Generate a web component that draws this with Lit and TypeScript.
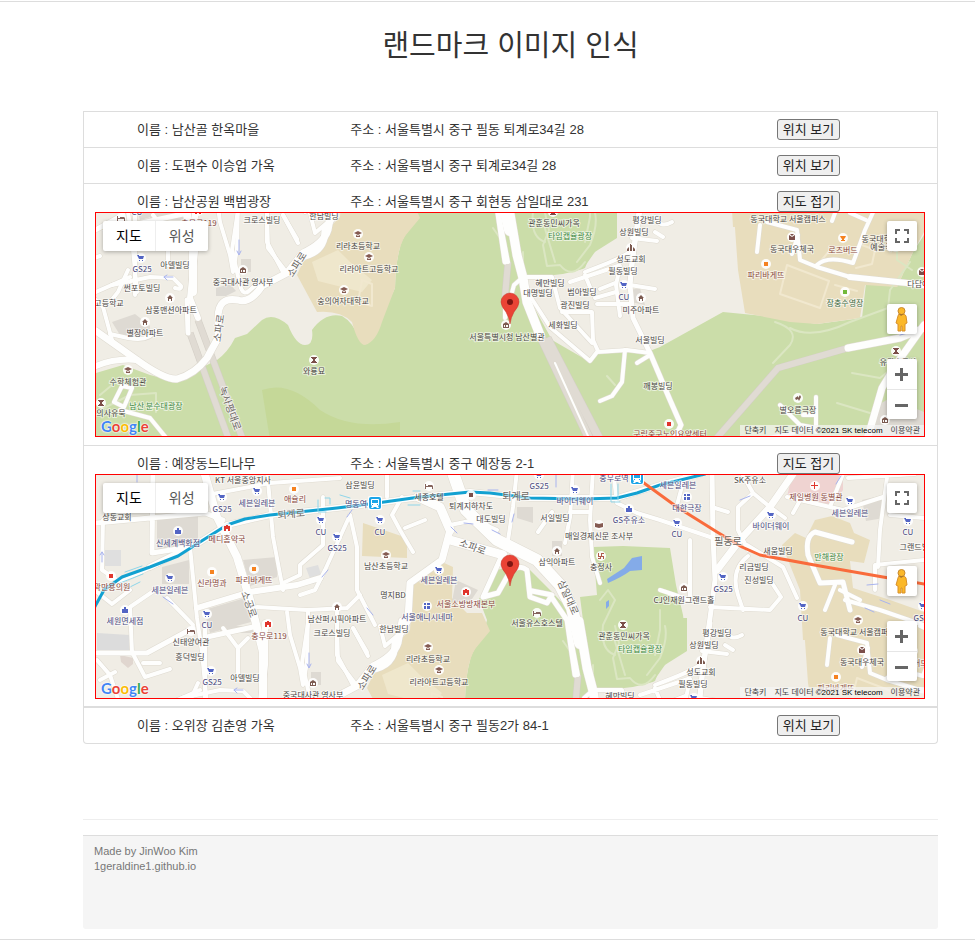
import { LitElement, html, svg, css } from "lit";
import { customElement, property, state } from "lit/decorators.js";
import { classMap } from "lit/directives/class-map.js";

interface Place {
  name: string;
  address: string;
  center: [number, number];
}
type Road = [width: number, points: string];
type Area = [fill: string, points: string];
type Label = [x: number, y: number, text: string, kind?: string, turn?: number];
type Poi = [kind: string, x: number, y: number];

const places: Place[] = [
  { name: "남산골 한옥마을", address: "서울특별시 중구 필동 퇴계로34길 28", center: [560, 190] },
  { name: "도편수 이승업 가옥", address: "서울특별시 중구 퇴계로34길 28", center: [570, 180] },
  { name: "남산공원 백범광장", address: "서울특별시 중구 회현동 삼일대로 231", center: [510, 324] },
  { name: "예장동느티나무", address: "서울특별시 중구 예장동 2-1", center: [440, 173] },
  { name: "오위장 김춘영 가옥", address: "서울특별시 중구 필동2가 84-1", center: [575, 175] },
];

const GREEN = "#cbdda9";
const TAN = "#e8ddbd";
const BLOCK = "#dedad3";

/* South sheet: Namsan park side. */
const southAreas: Area[] = [
  [GREEN, "M96 373L123 365L150 375L177 382L205 366L217 360Q228 352 235 338L247 334L262 320Q273 312 288 325Q296 345 305 345Q314 345 312 330Q325 312 342 316Q353 322 360 340L372 338L395 288Q396 250 405 236L420 213L505 213L530 300L552 340L590 362L597 352L647 352L660 347L723 312L765 316L817 324L862 318L866 283L897 287L913 252L924 235V440H96Z"],
  ["#c5d898", "M262 390Q290 380 320 410Q350 430 400 422V440H270Z"],
  [GREEN, "M516 205H617V238L590 255L585 268Q560 278 522 275Z"],
  [TAN, "M347 200L345 220L330 242L303 262L297 275L317 312Q340 310 352 322Q358 345 365 345Q376 342 382 322L395 288Q396 250 405 236L420 218L412 200Z"],
  ["#efe7cc", "M312 262L338 250L350 262L372 280L362 292L318 281Z"],
  [TAN, "M733 200L738 270L745 313L790 322L817 324L860 318L865 285L897 287L913 252L924 232V200Z"],
  ["#dcd9d3", "M216 288L230 284L236 291L226 296H216Z"],
  [BLOCK, "M241 259H251V272H241Z"],
  [BLOCK, "M112 322L135 314L150 326V335H120Z"],
  [BLOCK, "M150 213H190V220H150Z"],
  [BLOCK, "M630 290L640 288L645 305L631 302Z"],
  [BLOCK, "M878 405L890 398L924 412V440H870Z"],
];
/* North sheet: Toegye-ro side, 70 right and 413 down from the south sheet. */
const northAreas: Area[] = [
  [GREEN, "M479 599L497 570L517 565L530 570L550 590L572 613L578 640H482L487 620Z"],
  [GREEN, "M593 547L623 546L670 548L676 585L683 615L687 648L667 662L653 682L592 690L580 597L597 595Z"],
  [TAN, "M363 523L407 538V558L362 556Z"],
  [TAN, "M413 583L442 562L453 567L452 598L487 633V660H380L410 630Z"],
  [TAN, "M782 545L795 533L806 538L815 520L832 516L850 523L854 533L870 540L864 563L850 561L853 588L890 600L924 612V640H803L800 590Z"],
  ["#efd3d1", "M793 470H843V490L830 507L787 497Z"],
  [BLOCK, "M157 518L198 515V540L170 552L157 548Z"],
  [BLOCK, "M162 567L189 560V584H162Z"],
  [BLOCK, "M243 560L277 557V577L250 586Z"],
  [BLOCK, "M204 610L245 598L251 622L210 633Z"],
  ["#dcdcdc", "M97 633L130 635V650H97Z"],
  ["#dfdfdf", "M105 550H121V566H105Z"],
  ["#dfdfdf", "M306 568L318 565L323 580L312 584Z"],
  [BLOCK, "M456 580L478 590L470 602H452Z"],
  [BLOCK, "M517 507H533V523L517 518Z"],
  [BLOCK, "M862 500L884 495V518L866 521Z"],
  [BLOCK, "M552 541H562V556H552Z"],
  ["#e0d6cf", "M120 655L133 658V664L128 668L121 662Z"],
  ["#84abe8", "M632 558L642 556V570L630 571Q622 577 608 583L607 579L624 568Z"],
  ["#84abe8", "M606 602L609 600V606L606 609Z"],
];

const tunnels: Road[] = [
  [6, "M190 333L229 440"],
  [6, "M198 320L243 440"],
  [6, "M508 262L505 297"],
  [8, "M540 335L590 440"],
  [8, "M547 338L600 440"],
  [6, "M715 440L778 368L848 348"],
];

const southRoads: Road[] = [
  [7, "M332 208L328 230Q324 243 303 253L287 273L262 286Q250 304 238 300Q218 296 218 318V338L207 358Q195 374 177 379Q165 380 137 360L96 331"],
  [6, "M195 210V252L190 298L198 318"],
  [5, "M187 300L188 333"],
  [6, "M96 366Q115 358 137 360"],
  [4, "M238 210L232 250L240 285Q243 297 250 290L258 283"],
  [4, "M267 213L268 248L287 273"],
  [4, "M283 215L298 243"],
  [4, "M135 213V295M112 285L150 277L173 278L181 286Q182 290 175 288"],
  [4, "M96 300L103 307L112 340M128 270L118 292L110 302"],
  [4, "M310 213L315 233L328 222"],
  [4, "M110 334L128 338Q150 342 155 330"],
  [4, "M114 402L122 386L132 388L124 407ZM120 410L150 418L168 440"],
  [4, "M498 210L508 262"],
  [9, "M509 208L517 255L523 278L527 302L540 335"],
  [4, "M505 303V318L514 285L522 278"],
  [4, "M525 277H552L560 308L592 343"],
  [4, "M530 296L550 327L590 361L597 352L627 350L650 353"],
  [4, "M562 312H592L593 340L598 351M570 282L618 266M585 275L592 292M595 298L616 292M600 289L615 283"],
  [4, "M620 266L616 285L620 316"],
  [5, "M640 210L632 262L630 285L633 318L650 353L670 400L681 425L674 440"],
  [4, "M630 285L655 289M632 238L657 241M597 304H630"],
  [4, "M625 350L622 382L612 396L600 401M637 363L650 355"],
  [2, "M555 363L588 436"],
  [4, "M655 217Q660 229 672 222"],
  [7, "M848 348L900 338L924 328M867 440L882 388L897 363L924 325"],
  [4, "M760 225L757 252M767 222L797 230L800 260L817 267L850 277"],
  [6, "M850 277L907 283L930 286"],
  [4, "M817 265Q827 255 853 263L865 230L875 208M850 213L866 220M798 235L792 254M835 213L832 221"],
  [4, "M816 397V432M780 405L800 425L816 428L760 440M803 415H816"],
];
const northRoads: Road[] = [
  [6, "M150 567L200 542L227 525L270 515L337 508L377 503L420 497L470 492L530 498L617 498L660 485L700 474"],
  [12, "M452 470L466 510L497 540L537 560L560 585L572 608L580 643"],
  [9, "M450 540L503 555M418 497L440 507L450 530"],
  [7, "M450 530L442 560L410 583L408 620L395 643Q395 666 370 670"],
  [5, "M503 553L483 597L498 593L507 577Q517 562 527 570L530 597L547 603L552 595L532 591"],
  [5, "M552 598L567 620L575 675"],
  [4, "M387 470L387 497M402 497L392 515L400 530L413 552M405 528L425 520M450 525L475 520L497 530"],
  [4, "M517 470L513 507L507 547"],
  [4, "M573 470L570 517L565 543M570 512H590M538 532L552 512"],
  [4, "M593 470L590 520L592 557L600 583"],
  [4, "M613 470L617 503L637 513L660 520L713 538"],
  [5, "M712 470L713 537L715 580L710 618L705 652L700 695"],
  [4, "M685 475L677 505M690 540V600M715 508L728 512"],
  [7, "M717 570L740 540L770 507L793 474"],
  [4, "M753 493L738 507V530L748 550M740 470L753 493L770 507L785 518"],
  [4, "M748 556Q730 570 738 595L743 610M710 607L770 610L781 597L770 580M747 545L783 567L797 598"],
  [4, "M787 497L830 507L843 510L883 497M888 470L880 530L878 567M793 513L803 495M830 507L843 474M848 478L915 474"],
  [5, "M852 542L815 532Q805 536 808 555L820 583L843 582L850 610"],
  [4, "M875 590V565L924 560M890 515L924 518M835 585L825 610M845 600L880 610L924 625M860 600L840 590"],
  [5, "M153 470L152 553L190 547M97 523L150 518L205 513L223 520"],
  [8, "M205 475L217 517L237 557L250 600L263 652V705"],
  [4, "M190 547L197 618L202 652L207 705"],
  [4, "M103 520L102 570L120 582L160 563M97 592L112 604L130 590"],
  [4, "M267 470L273 537L283 590M207 495L270 483L340 478"],
  [4, "M323 497V545L300 565V575L283 583"],
  [4, "M350 515L325 570L315 590L300 595M350 515L357 547V590L375 625"],
  [6, "M197 608L250 592L297 585L320 578"],
  [4, "M257 607L307 610L347 608L360 595"],
  [5, "M207 637L253 627M97 653H147L193 628"],
  [4, "M155 590L130 607L132 652L145 677L170 669M143 663H160M167 598L193 625"],
  [4, "M223 628L238 648V678M238 648L248 638"],
  [4, "M287 612L290 635L300 668L303 685L307 662L308 612M337 612V655L353 685M353 628L367 652"],
  [4, "M97 660L110 675L120 705M100 680L115 672M166 705L200 690"],
  [4, "M660 590L690 600M700 665Q690 672 655 685M725 645L733 650"],
];

const southLabels: Label[] = [
  [199, 222, "충무로119", "shop"], [262, 219, "크로스빌딩"], [324, 215, "한남빌딩"],
  [358, 245, "리라초등학교"], [369, 268, "리라아트고등학교"], [343, 300, "숭의여자대학교"],
  [142, 268, "GS25", "store"], [175, 264, "아델빌딩"], [142, 287, "썬포토빌딩"],
  [243, 281, "중국대사관 영사부"], [109, 302, "고등학교"], [171, 309, "삼풍맨션아파트"],
  [145, 332, "별장아파트"], [296, 264, "소파로", "road", -58], [218, 328, "소파로", "road", -82],
  [128, 381, "수학체험관"], [156, 405, "남산 분수대광장", "park"], [111, 412, "의사유묵"],
  [231, 408, "녹사평대로", "road", 70], [314, 370, "와룡묘"], [554, 222, "관훈동민씨가옥"],
  [570, 235, "타임캡슐광장", "park"], [647, 219, "평강빌딩"], [634, 231, "상원빌딩"],
  [631, 258, "성도교회"], [623, 270, "필동빌딩"], [624, 296, "CU", "store"],
  [641, 309, "미주아파트"], [550, 282, "혜만빌딩"], [538, 292, "대명빌딩"],
  [582, 291, "범아빌딩"], [575, 304, "광진빌딩"], [563, 324, "세화빌딩"],
  [650, 339, "서울빌딩"], [507, 336, "서울특별시청 남산별관"], [658, 385, "깨봉빌딩"],
  [670, 433, "구립중구노인요양센터", "shop"], [788, 218, "동국대학교 서울캠퍼스"],
  [792, 248, "동국대우체국"], [843, 249, "로즈버드", "shop"], [880, 238, "동국대학교"],
  [885, 246, "예술극장"], [766, 274, "파리바게뜨", "shop"], [845, 302, "장충수영장", "pool"],
  [922, 283, "다담에뜰"], [798, 409, "별오름극장"], [898, 361, "유관순동상"],
];
const northLabels: Label[] = [
  [243, 479, "KT 서울중앙지사"], [295, 498, "애슐리", "shop"], [257, 502, "세븐일레븐", "store"],
  [222, 508, "GS25", "store"], [360, 484, "삼윤빌딩"], [356, 503, "명동역", "store"],
  [291, 513, "퇴계로", "road", -5], [117, 516, "상동교회"], [178, 542, "신세계백화점", "store"],
  [227, 538, "메디홈약국", "shop"], [321, 531, "CU", "store"], [337, 547, "GS25", "store"],
  [112, 586, "곽만용의원", "shop"], [212, 582, "신라명과", "shop"], [254, 579, "파리바게뜨", "shop"],
  [170, 589, "세븐일레븐", "store"], [125, 620, "세원면세점", "store"], [207, 624, "CU", "store"],
  [191, 641, "신태양여관"], [190, 656, "흥덕빌딩"], [250, 604, "소공로", "road", 70],
  [337, 618, "남산퍼시픽아파트"], [386, 565, "남산초등학교"], [380, 531, "CU", "store"],
  [429, 496, "세종호텔"], [471, 505, "퇴계지하차도"], [516, 495, "퇴계로", "road"],
  [491, 518, "대도빌딩"], [539, 485, "GS25", "store"], [575, 500, "바이더웨이", "store"],
  [555, 517, "서일빌딩"], [629, 519, "GS주유소", "store"], [599, 535, "매일경제신문 조사부"],
  [614, 477, "충무로역", "store"], [473, 546, "소파로", "road", 20], [557, 561, "삼익아파트"],
  [601, 566, "충정사"], [439, 579, "세븐일레븐", "store"], [393, 594, "명지BD"],
  [466, 603, "서울소방방재본부", "shop"], [427, 616, "서울애니시네마", "store"],
  [569, 597, "삼일대로", "road", 66], [537, 622, "서울유스호스텔"], [684, 599, "CJ인재원그랜드홀"],
  [678, 484, "세븐일레븐", "store"], [687, 507, "대한극장", "store"], [677, 533, "CU", "store"],
  [750, 479, "SK주유소"], [816, 496, "제일병원 동별관", "shop"], [850, 512, "세븐일레븐", "store"],
  [771, 525, "바이더웨이", "store"], [728, 540, "필동로", "road"], [778, 550, "새움빌딩"],
  [829, 556, "만해광장", "park"], [754, 566, "리금빌딩"], [759, 579, "진성빌딩"],
  [723, 588, "GS25", "store"], [908, 531, "CU", "store"], [918, 546, "그랜드빌라"],
  [803, 617, "CU", "store"], [923, 617, "GS25", "store"],
];

const southPois: Poi[] = [
  ["school", 358, 234], ["school", 369, 257], ["school", 344, 290], ["cart", 141, 258],
  ["museum", 243, 270], ["home", 170, 298], ["home", 145, 322], ["school", 128, 370],
  ["tower", 101, 403], ["tower", 314, 360], ["tower", 553, 212], ["church", 631, 248],
  ["cart", 624, 285], ["home", 641, 298], ["museum", 506, 325], ["clinic", 669, 424],
  ["school", 788, 207], ["post", 792, 237], ["cup", 843, 238], ["bread", 766, 264],
  ["pool", 845, 292], ["film", 798, 398], ["tower", 896, 351], ["museum", 885, 420],
  ["post", 922, 272], ["fire", 198, 211],
];
const northPois: Poi[] = [
  ["bread", 294, 489], ["cart", 257, 491], ["cart", 222, 497], ["bag", 178, 531],
  ["fire", 227, 528], ["cart", 321, 520], ["cart", 337, 537], ["clinic", 111, 576],
  ["bread", 212, 572], ["bread", 254, 569], ["cart", 170, 578], ["bag", 125, 610],
  ["cart", 207, 614], ["bed", 191, 631], ["home", 337, 607], ["school", 386, 555],
  ["cart", 380, 520], ["bed", 429, 486], ["stop", 471, 495], ["cart", 539, 475],
  ["cart", 575, 490], ["bag", 629, 509], ["book", 599, 525], ["home", 557, 551],
  ["temple", 601, 556], ["cart", 439, 570], ["fire", 466, 592], ["cinema", 427, 606],
  ["bed", 537, 613], ["museum", 684, 588], ["cinema", 687, 497], ["cart", 677, 523],
  ["cross", 815, 486], ["cart", 850, 501], ["cart", 771, 515], ["cart", 723, 577],
  ["cart", 908, 521], ["cart", 803, 606], ["cart", 923, 606],
];

const glyphs: Record<string, [string, string]> = {
  school: ["#855b52", "M-4-1L0-3L4-1L0 1ZM-2 1L0 2L2 1V3H-2Z"],
  cart: ["#5365c4", "M-4-3H-2L-2-2H3L2 1H-2ZM-2 2H-1V3H-2ZM1 2H2V3H1Z"],
  home: ["#7c5a50", "M-3 0L0-3L3 0H2V3H1V1H-1V3H-2V0Z"],
  museum: ["#7c5a50", "M-3-1L0-3L3-1V0H-3ZM-3 0H-2V3H-3ZM-1 0H0V3H-1ZM2 0H3V3H2ZM-3 2H3V3H-3Z"],
  tower: ["#7c4f4a", "M-3-3H3V-2H2V-1H1V1H2V2H3V3H-3V2H-2V1H-1V-1H-2V-2H-3Z"],
  church: ["#7c5a50", "M-1-4H0V-3H1V3H-1ZM-4 1L-2-1V3H-4ZM2-1L4 1V3H2Z"],
  clinic: ["#e0352d", "M-2-2H2V2H-2Z"],
  fire: ["#e0352d", "M-3-2H-1V-3H1V-2H3V3H1V1H-1V3H-3Z"],
  post: ["#7c4f4a", "M-3-2L0 0L3-2V3H-3ZM-2-3H2L0-1Z"],
  stop: ["#7c4f4a", "M-2-2H2V2H-2Z"],
  book: ["#855b52", "M-4-2L0-1L4-2V2L0 3L-4 2Z"],
  cup: ["#f58220", "M-3-2H3L2 0L1 1V2H2V3H-2V2H-1V1L-2 0Z"],
  bread: ["#f58220", "M-2-2H2V2H-2Z"],
  pool: ["#73b93c", "M-2-2H2V2H-2Z"],
  film: ["#7c5a50", "M-3 0L0-2V0L2-3L3-1L1 3L0 1L-2 2Z"],
  bag: ["#5365c4", "M-3-1H-1V-3H1V-1H3V3H-3Z"],
  bed: ["#85645c", "M-4-2H-3V0H-1V-1H3L4 0V3H3V1H-3V3H-4Z"],
  temple: ["#b05a4a", "M-3-3H-2V0H0V-3H3V-2H1V0H3V3H2V1H0V3H-3V2H-1V1H-3Z"],
  cinema: ["#5365c4", "M-3-3H-1V-1H-3ZM0-3H3V-1H0ZM-3 0H-1V3H-3ZM0 0H3V3H0Z"],
  cross: ["#e0352d", "M-1-4H0V-1H3V0H0V3H-1V0H-4V-1H-1Z"],
};

const SHIFT_X = 70;
const SHIFT_Y = 413;
const NORTH = `translate(${-SHIFT_X} ${-SHIFT_Y})`;

const allLabels: Label[] = [
  ...northLabels.map(([x, y, ...rest]) => [x - SHIFT_X, y - SHIFT_Y, ...rest] as Label),
  ...southLabels,
];
const allPois: Poi[] = [
  ...northPois.map(([kind, x, y]) => [kind, x - SHIFT_X, y - SHIFT_Y] as Poi),
  ...southPois,
];

@customElement("place-map")
class PlaceMap extends LitElement {
  @property({ attribute: false }) center: [number, number] = [0, 0];
  @state() private satellite = false;

  static styles = css`
    :host {
      display: block;
      position: relative;
      height: 223px;
      overflow: hidden;
      border: 1px solid #f00;
      background: #f0ede5;
      font-family: "Liberation Sans", "Noto Sans CJK KR", sans-serif;
    }
    button { margin: 0; padding: 0; border: 0; background: none; font: inherit; color: inherit; cursor: pointer; }
    .canvas { display: block; width: 100%; height: 100%; }
    .canvas.satellite { filter: saturate(60%) brightness(70%); }
    .line { fill: none; stroke-linejoin: round; stroke-linecap: round; }
    .edge { stroke: #dfdbd1; }
    .road { stroke: #fefefd; }
    .tunnel { stroke: #e0dbd3; stroke-linecap: butt; }
    .tunnel-edge { stroke: #d3cec6; stroke-linecap: butt; }
    .trail { stroke: #dbe6c2; stroke-width: 2; }
    .yard { stroke: #f1e8cf; stroke-width: 2; }
    .arrow { stroke: #a9b4ee; stroke-width: 1; }
    .metro { stroke: #12a1d1; stroke-width: 3; }
    .exits { stroke: #8fd6ea; stroke-width: 1; }
    .metro3 { stroke: #f96b3b; stroke-width: 3; }
    .label {
      font-family: "Noto Sans CJK KR", sans-serif;
      font-size: 8px;
      text-anchor: middle;
      dominant-baseline: central;
      fill: #4b4744;
      stroke: #fff;
      stroke-opacity: 0.6;
      stroke-width: 2px;
      stroke-linejoin: round;
      paint-order: stroke;
    }
    .store { fill: #4a4a80; }
    .shop { fill: #8b4a42; }
    .park { fill: #3f8a45; }
    .pool { fill: #3c6b45; }
    .label.road { fill: #6b6762; stroke: #fff; font-size: 10px; }
    .types { position: absolute; left: 7px; top: 8px; display: flex; border-radius: 2px; background: #fff; box-shadow: 0 1px 4px #0000004d; }
    .type { padding: 0 13px; height: 30px; font-size: 14px; line-height: 30px; color: #565656; }
    .type + .type { border-left: 1px solid #eee; }
    .type.on { color: #000; }
    .tool { display: block; width: 30px; height: 30px; }
    .full, .walk, .zoom { position: absolute; right: 7px; border-radius: 2px; background: #fff; box-shadow: 0 1px 4px #0000004d; }
    .full { top: 8px; }
    .walk { bottom: 102px; }
    .zoom { bottom: 17px; }
    .zoom .tool + .tool { border-top: 1px solid #e6e6e6; }
    .tool svg { display: block; width: 30px; height: 30px; }
    .logo {
      position: absolute; left: 5px; bottom: 0;
      font: 700 15px/20px Lato, sans-serif; text-decoration: none;
      text-shadow: 0 0 1px #fff, 0 0 2px #fff, 0 0 2px #fff;
    }
    .b { color: #4285f4; } .r { color: #ea4335; } .y { color: #fbbc04; } .g { color: #34a853; }
    .credit {
      position: absolute; right: 0; bottom: 0; display: flex; gap: 8px; padding: 0 4px;
      height: 11px; line-height: 11px; font-size: 8px; color: #444; background: #f5f5f5b3;
    }
    .credit b { font-weight: 400; color: #000; }
    .credit a { color: inherit; text-decoration: none; }
  `;

  private inView(x: number, y: number) {
    return Math.abs(x - this.center[0]) < 414 && Math.abs(y - this.center[1]) < 114;
  }
  private roads(list: Road[], cls: string, extra: number) {
    return list.map(([w, d]) => svg`<path class="line ${cls}" stroke-width=${w + extra} d=${d} />`);
  }
  private areas(list: Area[]) {
    return list.map(([fill, d]) => svg`<path fill=${fill} d=${d} />`);
  }
  private pois() {
    return allPois.filter(([, x, y]) => this.inView(x, y)).map(([kind, x, y]) => svg`<g transform="translate(${x} ${y})">
      <circle r="5" fill="#fff" fill-opacity="0.9" /><path fill=${glyphs[kind][0]} d=${glyphs[kind][1]} /></g>`);
  }
  private labels() {
    return allLabels.filter(([x, y]) => this.inView(x, y)).map(([x, y, text, kind = "", turn = 0]) =>
      svg`<text class="label ${kind}" x=${x} y=${y} transform="rotate(${turn} ${x} ${y})">${text}</text>`);
  }
  private station(x: number, y: number) {
    return svg`<g transform="translate(${x} ${y})">
      <rect x="-7" y="-7" width="14" height="14" rx="2" fill="#fff" />
      <rect x="-6" y="-6" width="12" height="12" rx="2" fill="#1ba5e8" />
      <path fill="#fff" fill-rule="evenodd" d="M-3-4H3Q4-4 4-3V2L3 3L4 5H2L1 4H-1L-2 5H-4L-3 3L-4 2V-3Q-4-4-3-4ZM-3-3V0H3V-3ZM-3 1V2H-2V1ZM2 1V2H3V1Z" />
    </g>`;
  }

  render() {
    const [cx, cy] = this.center;
    return html`
      <svg class=${classMap({ canvas: true, satellite: this.satellite })} viewBox="${cx - 414} ${cy - 111} 828 223"
        preserveAspectRatio="xMidYMid slice" role="img" aria-label="지도">
        <g transform=${NORTH}>${this.areas(northAreas)}</g>
        ${this.areas(southAreas)}
        <path class="line trail" d="M545 213L549 230L543 245L547 266L560 265Q572 280 585 262M595 213Q598 225 590 245L577 262M100 395L112 385M100 410L130 395L156 393V412M775 322Q800 330 790 345L773 363M790 328Q812 340 850 322L888 308L890 290L910 262M852 373L880 378L890 370M837 403L870 413M108 425L120 432M607 376L615 385M493 228L500 238M897 250V260L912 270M523 252V268" />
        <path class="line yard" d="M787 265L829 281L820 308L780 294ZM835 285L857 291M862 245L875 250L872 264L856 268M362 280L372 284V306L358 302ZM830 250L820 262" />
        <g transform=${NORTH}>
          <path class="line trail" d="M600 600L608 590L615 600L603 625Q600 650 615 655M613 635L625 675M660 610V630L655 655" />
        </g>
        ${this.roads(tunnels, "tunnel-edge", 1)}${this.roads(tunnels, "tunnel", 0)}
        <g transform=${NORTH}>${this.roads(northRoads, "edge", 1)}</g>
        ${this.roads(southRoads, "edge", 1)}
        <g transform=${NORTH}>${this.roads(northRoads, "road", 0)}</g>
        ${this.roads(southRoads, "road", 0)}
        <path class="line arrow" d="M239 240V254M237 251L239 255L241 251M173 277H164M167 275L164 277L167 280M900 335L908 333" />
        <g transform=${NORTH}>
          <path class="line arrow" d="M102 562V552M100 555L102 552L104 555M137 482V475M163 597L173 604M322 577L328 570M347 517L352 510M464 523L473 524M488 490L498 490M492 530L500 534M451 527L457 533M512 522L514 514M556 475V487M740 500L750 496M836 484L841 476M867 585L878 584M865 608L874 612M880 600L890 604M367 608L373 615" />
          <path class="line metro" d="M92 612L104 590L122 577L150 567L178 556L200 542L227 525L245 519L270 515L337 508L377 503L420 497L470 492L490 493L530 498L583 499L617 498L637 493L660 485L705 474" />
          <path class="line exits" d="M125 572L142 566M120 583L143 574M318 500V512H326M325 498H330V504M413 491H420M408 505H420M611 484V502H620M618 484V500M340 495L350 498M128 588L140 582" />
          <path class="line metro3" d="M637 478L655 491L677 507L717 532L742 547L760 555L820 566L883 577L930 585" />
        </g>
        ${this.pois()}${this.labels()}
        <g transform=${NORTH}>${this.station(375, 503)}${this.station(637, 478)}</g>
        <g transform="translate(${cx} ${cy})">
          <path fill="#ea4335" stroke="#c5352b" stroke-width="0.5" d="M0 0Q-1-7-4-12Q-9-18-9-22A9 9 0 0 1 9-22Q9-18 4-12Q1-7 0 0Z" />
          <circle cy="-22" r="3" fill="#7f1512" />
        </g>
      </svg>
      <div class="types">
        <button class=${classMap({ type: true, on: !this.satellite })} @click=${() => (this.satellite = false)}>지도</button>
        <button class=${classMap({ type: true, on: this.satellite })} @click=${() => (this.satellite = true)}>위성</button>
      </div>
      <button class="full tool" aria-label="전체 화면">
        <svg viewBox="0 0 30 30"><path fill="none" stroke="#666" stroke-width="2" d="M9 13V9H13M17 9H21V13M21 17V21H17M13 21H9V17" /></svg>
      </button>
      <button class="walk tool" aria-label="스트리트 뷰">
        <svg viewBox="0 0 30 30">
          <path fill="#fbb829" stroke="#d8902a" stroke-width="1" d="M11 12Q11 10 13 10H16Q18 10 19 12L20 19L18 20V27H15V22H14V27H11V20L9 19Z" />
          <circle cx="14.5" cy="7" r="3.5" fill="#fbb829" stroke="#c78a31" />
          <path fill="#a9762d" d="M12 10H17L14 12Z" />
        </svg>
      </button>
      <div class="zoom">
        <button class="tool" aria-label="확대"><svg viewBox="0 0 30 30"><path fill="#666" d="M8 14H13V9H16V14H21V17H16V22H13V17H8Z" /></svg></button>
        <button class="tool" aria-label="축소"><svg viewBox="0 0 30 30"><path fill="#666" d="M8 14H21V17H8Z" /></svg></button>
      </div>
      <a class="logo" href="#maps" aria-label="Google"><span class="b">G</span><span class="r">o</span><span class="y">o</span><span class="b">g</span><span class="g">l</span><span class="r">e</span></a>
      <div class="credit">
        <button>단축키</button>
        <span>지도 데이터 <b>©2021 SK telecom</b></span>
        <a href="#terms">이용약관</a>
      </div>
    `;
  }
}

@customElement("app-root")
class AppRoot extends LitElement {
  @state() private open = new Set<number>([2, 3]);

  static styles = css`
    :host {
      display: block;
      margin-top: 1px;
      border-top: 1px solid #ddd;
      border-bottom: 1px solid #ddd;
      background: #fff;
      color: #333;
      font: 13px/20px "Liberation Sans", "Noto Sans CJK KR", sans-serif;
    }
    .page { padding: 24px 37px 10px 83px; }
    .title { margin: 0 0 45px; font-size: 29px; font-weight: 400; line-height: 40px; text-align: center; }
    .list { margin: 0; padding: 0; list-style: none; border: 1px solid #ddd; border-top: 0; border-radius: 0 0 4px 4px; }
    .item { padding-bottom: 7px; border-top: 1px solid #ddd; }
    .open { padding-bottom: 8px; }
    .open + .open { padding-bottom: 7px; border-bottom: 1px solid #ddd; }
    .row { display: grid; grid-template-columns: 1fr 2fr 1fr; padding-top: 7px; align-items: center; }
    .cell { padding-left: 53px; }
    .toggle {
      display: block; height: 21px; margin: 0; padding: 0 5px; box-sizing: border-box;
      border: 1px solid #767676; border-radius: 3px; background: #efefef;
      font: inherit; line-height: 19px; color: #222; cursor: pointer;
    }
    .map { margin: 0 12px 0 11px; }
    .rule { margin: 75px 0 15px; border: 0; border-top: 1px solid #eee; }
    .footer {
      min-height: 75px; padding: 8px 11px 10px; border-top: 1px solid #ddd; border-radius: 0 0 3px 3px;
      background: #f5f5f5; color: #777; font-size: 11px; line-height: 15px;
    }
    .footer p { margin: 0; }
    .footer a { color: inherit; text-decoration: none; }
  `;

  private toggle(i: number) {
    const next = new Set(this.open);
    next.has(i) ? next.delete(i) : next.add(i);
    this.open = next;
  }

  render() {
    return html`
      <main class="page">
        <h1 class="title">랜드마크 이미지 인식</h1>
        <ul class="list">
          ${places.map((p, i) => {
            const shown = this.open.has(i);
            return html`<li class=${classMap({ item: true, open: shown })}>
              <div class="row">
                <span class="cell">이름 : ${p.name}</span>
                <span class="cell">주소 : ${p.address}</span>
                <span class="cell"><button class="toggle" aria-expanded=${shown} @click=${() => this.toggle(i)}>${shown ? "지도 접기" : "위치 보기"}</button></span>
              </div>
              ${shown ? html`<place-map class="map" .center=${p.center}></place-map>` : ""}
            </li>`;
          })}
        </ul>
        <hr class="rule" />
        <footer class="footer">
          <p>Made by JinWoo Kim</p>
          <p><a href="https://1geraldine1.github.io">1geraldine1.github.io</a></p>
        </footer>
      </main>
    `;
  }
}
